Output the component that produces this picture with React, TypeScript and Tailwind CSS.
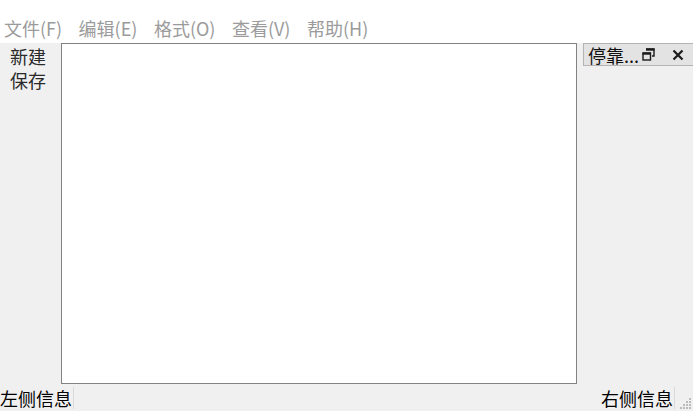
const font = "font-['Microsoft_YaHei','Noto_Sans_CJK_SC',sans-serif]";

function FloatIcon() {
  return (
    <svg width="13" height="13" viewBox="0 0 13 13" className="block">
      <path d="M4 1h8v7h-2" fill="none" stroke="#1a1a1a" strokeWidth="1.4" />
      <rect x="4" y="0.5" width="8.5" height="2.2" fill="#1a1a1a" />
      <rect x="1" y="5" width="7.5" height="7" fill="none" stroke="#1a1a1a" strokeWidth="1.4" />
      <rect x="0.5" y="4.5" width="8.5" height="2.2" fill="#1a1a1a" />
    </svg>
  );
}

function CloseIcon() {
  return (
    <svg width="12" height="12" viewBox="0 0 12 12" className="block">
      <path d="M1.5 1.5l9 9M10.5 1.5l-9 9" stroke="#1a1a1a" strokeWidth="2.2" />
    </svg>
  );
}

export default function App() {
  const menus = ["文件(F)", "编辑(E)", "格式(O)", "查看(V)", "帮助(H)"];

  return (
    <div className={`flex h-[411px] w-[693px] flex-col overflow-hidden bg-[#f0f0f0] text-[18px] ${font}`}>
      <div className="flex h-[43px] shrink-0 gap-[16px] bg-white pl-[4px] pt-[16px] leading-[24px] text-[#9b9b9b]">
        {menus.map((m) => (
          <span key={m} className="mr-[0.5px]">
            {m}
          </span>
        ))}
      </div>

      <div className="flex min-h-0 flex-1">
        <div className="flex w-[61px] shrink-0 flex-col items-center pr-[5px] pt-[1px] leading-[24px] text-[#2a2a2a]">
          <span>新建</span>
          <span>保存</span>
        </div>
        <div className="h-[341px] w-[516px] shrink-0 border border-[#828282] bg-white" />
        <div className="ml-[6px] flex-1">
          <div className="flex h-[23px] items-center border-l border-t border-b border-[#b4b4b4] bg-[#e3e3e3] pl-[4px] leading-[20px] text-[#111]">
            <span>停靠...</span>
            <span className="ml-[3px]">
              <FloatIcon />
            </span>
            <span className="ml-[17px]">
              <CloseIcon />
            </span>
          </div>
        </div>
      </div>

      <div className="flex h-[27px] shrink-0 items-center leading-[24px] text-black">
        <span className="pr-[1px]">左侧信息</span>
        <span className="h-[22px] w-px bg-[#dadada]" />
        <div className="flex-1" />
        <span className="pr-[1px]">右侧信息</span>
        <span className="h-[22px] w-px bg-[#dadada]" />
        <svg width="14" height="14" viewBox="0 0 14 14" className="ml-[4px] mt-[10px] block">
          {[
            [10, 2],
            [7, 5],
            [10, 5],
            [4, 8],
            [7, 8],
            [10, 8],
            [1, 11],
            [4, 11],
            [7, 11],
            [10, 11],
          ].map(([x, y]) => (
            <rect key={`${x}-${y}`} x={x} y={y} width="2" height="2" fill="#bcbcbc" />
          ))}
        </svg>
      </div>
    </div>
  );
}
